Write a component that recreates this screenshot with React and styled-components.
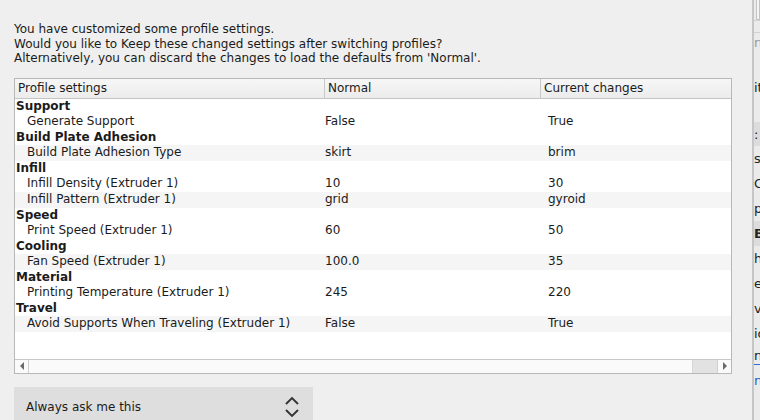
import React from 'react';
import styled, { createGlobalStyle } from 'styled-components'

const GlobalStyle = createGlobalStyle`
html, body {
  margin: 0;
  padding: 0;
  background: #efefef;
}
body {
  font-family: "DejaVu Sans", "Liberation Sans", sans-serif;
  font-size: 12px;
  color: #1b1b1b;
}
`

const groups = [
  { name: 'Support', items: [['Generate Support', 'False', 'True']] },
  { name: 'Build Plate Adhesion', items: [['Build Plate Adhesion Type', 'skirt', 'brim']] },
  {
    name: 'Infill', items: [
      ['Infill Density (Extruder 1)', '10', '30'],
      ['Infill Pattern (Extruder 1)', 'grid', 'gyroid'],
    ]
  },
  { name: 'Speed', items: [['Print Speed (Extruder 1)', '60', '50']] },
  { name: 'Cooling', items: [['Fan Speed (Extruder 1)', '100.0', '35']] },
  { name: 'Material', items: [['Printing Temperature (Extruder 1)', '245', '220']] },
  { name: 'Travel', items: [['Avoid Supports When Traveling (Extruder 1)', 'False', 'True']] },
]

// bits of the window behind the dialog
const behind = [
  { t: '', h: 20, box: true },
  { t: '', h: 12, line: true },
  { t: 'n', h: 20, line: true, faint: true },
  { t: 'it', h: 70 },
  { t: ':', h: 24, shade: true },
  { t: 's', h: 25 },
  { t: 'Co', h: 25 },
  { t: 'pa', h: 25 },
  { t: 'Bo', h: 25, shade: true, bold: true },
  { t: 'h', h: 25 },
  { t: 'e', h: 25 },
  { t: 've', h: 25 },
  { t: 'io', h: 25 },
  { t: 'n D', h: 18 },
  { t: 'n', h: 32, blue: true },
]

export default function App() {
  let childIndex = 0
  return (
    <>
      <GlobalStyle />
      <Page>
        <Dialog>
          <Intro>
            <div>You have customized some profile settings.</div>
            <div>Would you like to Keep these changed settings after switching profiles?</div>
            <div>Alternatively, you can discard the changes to load the defaults from 'Normal'.</div>
          </Intro>
          <Table>
            <HeadRow>
              <HeadCell>Profile settings</HeadCell>
              <HeadCell>Normal</HeadCell>
              <HeadCell last>Current changes</HeadCell>
            </HeadRow>
            <Body>
              {groups.map((g) => (
                <React.Fragment key={g.name}>
                  <CategoryRow>{g.name}</CategoryRow>
                  {g.items.map((it) => {
                    const alt = childIndex++ % 2 === 1
                    return (
                      <ItemRow key={it[0]} alt={alt}>
                        <NameCell>{it[0]}</NameCell>
                        <ValueCell>{it[1]}</ValueCell>
                        <ValueCell>{it[2]}</ValueCell>
                      </ItemRow>
                    )
                  })}
                </React.Fragment>
              ))}
            </Body>
            <HScroll>
              <ScrollButton><Arrow left /></ScrollButton>
              <Track><Thumb /></Track>
              <ScrollButton right><Arrow /></ScrollButton>
            </HScroll>
          </Table>
          <Combo>
            <span>Always ask me this</span>
            <svg width="16" height="22" viewBox="0 0 16 22">
              <polyline points="2,8 8,2 14,8" fill="none" stroke="#333" strokeWidth="1.9" />
              <polyline points="2,14 8,20 14,14" fill="none" stroke="#333" strokeWidth="1.9" />
            </svg>
          </Combo>
        </Dialog>
        <Side>
          {behind.map((b, i) => (
            <SideLine key={i} h={b.h} shade={b.shade} bold={b.bold} blue={b.blue} line={b.line} box={b.box} faint={b.faint}>
              {b.t}
            </SideLine>
          ))}
        </Side>
      </Page>
    </>
  )
}

const Page = styled.div`
display: flex;
height: 420px;
overflow: hidden;
`

const Dialog = styled.div`
width: 752px;
flex-shrink: 0;
box-sizing: border-box;
padding: 22px 20px 0 14px;
display: flex;
flex-direction: column;
`

const Intro = styled.div`
line-height: 14.5px;
flex-shrink: 0;
`

const Table = styled.div`
margin-top: 12px;
height: 296px;
flex-shrink: 0;
box-sizing: border-box;
border: 1px solid #b8b8b8;
background: #fff;
display: flex;
flex-direction: column;
`

const HeadRow = styled.div`
display: grid;
grid-template-columns: 310px 216px 1fr;
height: 19px;
border-bottom: 1px solid #c4c4c4;
background: linear-gradient(#f6f6f6, #ececec);
`

const HeadCell = styled.div`
padding-left: 3px;
line-height: 19px;
border-right: ${p => p.last ? 'none' : '1px solid #c8c8c8'};
white-space: nowrap;
`

const Body = styled.div`
flex: 1;
padding-top: 0.5px;
`

const CategoryRow = styled.div`
height: 15px;
line-height: 15px;
padding-left: 1px;
font-weight: bold;
`

const ItemRow = styled.div`
display: grid;
grid-template-columns: 310px 223px 1fr;
height: 16px;
line-height: 14px;
background: ${p => p.alt ? '#f5f5f5' : '#fff'};
`

const NameCell = styled.div`
padding-left: 12px;
white-space: nowrap;
`

const ValueCell = styled.div`
white-space: nowrap;
`

const HScroll = styled.div`
display: flex;
height: 13px;
border-top: 1px solid #c8c8c8;
background: #fafafa;
`

const ScrollButton = styled.div`
width: 13px;
display: flex;
align-items: center;
justify-content: center;
border-right: ${p => p.right ? 'none' : '1px solid #d0d0d0'};
border-left: ${p => p.right ? '1px solid #d0d0d0' : 'none'};
`

const Arrow = styled.div`
width: 0;
height: 0;
border-top: 4px solid transparent;
border-bottom: 4px solid transparent;
${p => p.left ? 'border-right: 4px solid #6a6a6a;' : 'border-left: 4px solid #6a6a6a;'}
`

const Track = styled.div`
flex: 1;
display: flex;
justify-content: flex-end;
`

const Thumb = styled.div`
width: 24px;
background: #e2e2e2;
border-left: 1px solid #d6d6d6;
`

const Combo = styled.div`
margin-top: 13px;
width: 299px;
height: 40px;
flex-shrink: 0;
box-sizing: border-box;
background: #dedede;
display: flex;
align-items: center;
justify-content: space-between;
padding: 0 13px 0 12px;
`

const Side = styled.div`
flex: 1;
background: #ebebeb;
border-left: 2px solid #c6c6c6;
overflow: hidden;
display: flex;
flex-direction: column;
`

const SideLine = styled.div`
height: ${p => p.h}px;
flex-shrink: 0;
box-sizing: border-box;
display: flex;
align-items: center;
white-space: nowrap;
font-size: 13px;
font-weight: ${p => p.bold ? 'bold' : 'normal'};
color: ${p => p.blue ? '#1f5fd0' : p.faint ? '#999' : '#222'};
background: ${p => p.shade ? '#dcdcdc' : 'transparent'};
border-top: ${p => p.blue ? '1px solid #2c6ad8' : p.line ? '1px solid #d2d2d2' : 'none'};
${p => p.box ? 'margin-left: 2px; border: 1px solid #c2c2c2; border-top: none; background: #f4f4f4;' : ''}
`
